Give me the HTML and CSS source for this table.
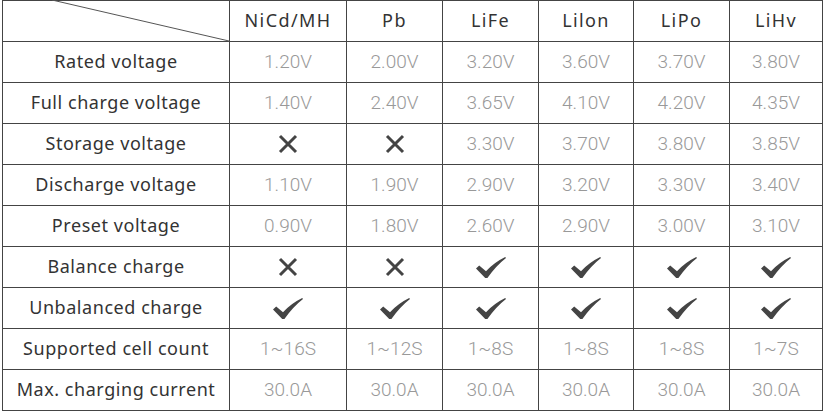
FILE: index.html
```html
<!DOCTYPE html>
<html lang="en">
<head>
<meta charset="utf-8">
<link rel="stylesheet" href="styles.css">
</head>
<body>
<svg width="0" height="0" class="defs">
  <defs>
    <symbol id="chk" viewBox="0 0 30 21">
      <path d="M0 11.5 L3.2 8.6 L10 14.2 Q18 5.5 29.2 0 L30 1 Q20 8.8 11.4 21 L9.2 21 Z" fill="#444"/>
    </symbol>
    <symbol id="no" viewBox="0 0 20 20">
      <path d="M2 2 L18 18 M18 2 L2 18" stroke="#444" stroke-width="3" fill="none"/>
    </symbol>
  </defs>
</svg>
<div class="grid">
  <div class="c corner"><svg class="diag" width="226" height="40"><line x1="49" y1="-1" x2="226" y2="40" stroke="#555" stroke-width="1"/></svg></div>
  <div class="c h">NiCd/MH</div><div class="c h">Pb</div><div class="c h">LiFe</div><div class="c h">Lilon</div><div class="c h">LiPo</div><div class="c h">LiHv</div>

  <div class="c l">Rated voltage</div>
  <div class="c v">1.20V</div><div class="c v">2.00V</div><div class="c v">3.20V</div><div class="c v">3.60V</div><div class="c v">3.70V</div><div class="c v">3.80V</div>

  <div class="c l">Full charge voltage</div>
  <div class="c v">1.40V</div><div class="c v">2.40V</div><div class="c v">3.65V</div><div class="c v">4.10V</div><div class="c v">4.20V</div><div class="c v">4.35V</div>

  <div class="c l">Storage voltage</div>
  <div class="c"><svg class="x"><use href="#no"/></svg></div><div class="c"><svg class="x"><use href="#no"/></svg></div><div class="c v">3.30V</div><div class="c v">3.70V</div><div class="c v">3.80V</div><div class="c v">3.85V</div>

  <div class="c l">Discharge voltage</div>
  <div class="c v">1.10V</div><div class="c v">1.90V</div><div class="c v">2.90V</div><div class="c v">3.20V</div><div class="c v">3.30V</div><div class="c v">3.40V</div>

  <div class="c l">Preset voltage</div>
  <div class="c v">0.90V</div><div class="c v">1.80V</div><div class="c v">2.60V</div><div class="c v">2.90V</div><div class="c v">3.00V</div><div class="c v">3.10V</div>

  <div class="c l">Balance charge</div>
  <div class="c"><svg class="x"><use href="#no"/></svg></div><div class="c"><svg class="x"><use href="#no"/></svg></div><div class="c"><svg class="ck"><use href="#chk"/></svg></div><div class="c"><svg class="ck"><use href="#chk"/></svg></div><div class="c"><svg class="ck"><use href="#chk"/></svg></div><div class="c"><svg class="ck"><use href="#chk"/></svg></div>

  <div class="c l">Unbalanced charge</div>
  <div class="c"><svg class="ck"><use href="#chk"/></svg></div><div class="c"><svg class="ck"><use href="#chk"/></svg></div><div class="c"><svg class="ck"><use href="#chk"/></svg></div><div class="c"><svg class="ck"><use href="#chk"/></svg></div><div class="c"><svg class="ck"><use href="#chk"/></svg></div><div class="c"><svg class="ck"><use href="#chk"/></svg></div>

  <div class="c l">Supported cell count</div>
  <div class="c v">1~16S</div><div class="c v">1~12S</div><div class="c v">1~8S</div><div class="c v">1~8S</div><div class="c v">1~8S</div><div class="c v">1~7S</div>

  <div class="c l">Max. charging current</div>
  <div class="c v">30.0A</div><div class="c v">30.0A</div><div class="c v">30.0A</div><div class="c v">30.0A</div><div class="c v">30.0A</div><div class="c v">30.0A</div>
</div>
</body>
</html>
```
FILE: styles.css
```css
html, body {
  margin: 0;
  padding: 0;
  background: #fff;
}
.defs {
  position: absolute;
  width: 0;
  height: 0;
}
.grid {
  margin-left: 2px;
  width: 821px;
  display: grid;
  grid-template-columns: 226px 116px 95px 95px 94px 95px 92px;
  grid-auto-rows: 40px;
  gap: 1px;
  padding: 1px;
  box-sizing: border-box;
  background: #444;
}
.c {
  background: #fff;
  display: flex;
  align-items: center;
  justify-content: center;
  font-family: "Noto Sans", "Liberation Sans", sans-serif;
  font-size: 18px;
  white-space: nowrap;
}
.corner {
  position: relative;
  overflow: visible;
}
.diag {
  position: absolute;
  left: 0;
  top: 0;
  overflow: visible;
}
.h, .l {
  color: #333;
  padding-bottom: 3px;
  box-sizing: border-box;
}
.l {
  letter-spacing: 0.55px;
}
.h {
  letter-spacing: 1.4px;
}
.v {
  color: #999;
  font-family: Roboto, "Liberation Sans", sans-serif;
  font-weight: 300;
  font-size: 19px;
  padding-bottom: 1px;
  box-sizing: border-box;
}
.x {
  width: 20px;
  height: 20px;
}
.ck {
  width: 30px;
  height: 21px;
}
```
